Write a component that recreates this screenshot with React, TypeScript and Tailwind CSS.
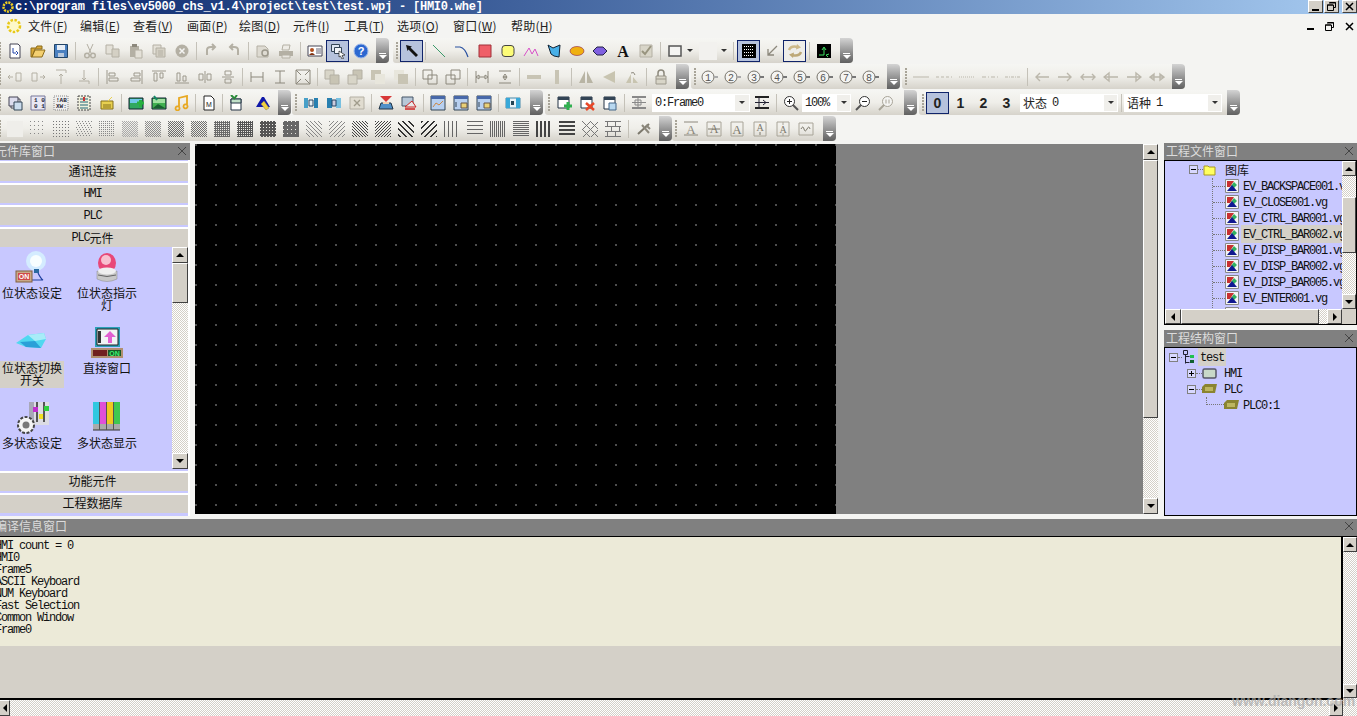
import React from 'react';

const D = '#b4b0a4';
const L = ({ d, c = D, w = 1 }: { d: string; c?: string; w?: number }) => (
  <path d={d} fill="none" stroke={c} strokeWidth={w} />
);

// toolbar glyphs, all on a 16x16 box
const icons: Record<string, React.ReactNode> = {
  new: (<><path d="M3 1h8l2 2v12H3z" fill="#fff" stroke="#445" /><L d="M6 5v5h3M9 8l2 2-2 2" c="#24a" /></>),
  open: (<><path d="M1 5h5l1-2h5v3H5l-3 8H1z" fill="#d8a838" stroke="#8a6a18" /><path d="M2 14l3-7h10l-3 7z" fill="#f4d070" stroke="#8a6a18" /></>),
  save: (<><path d="M1.500 1.500h13v13h-13z" fill="#4a80c0" stroke="#246" /><path d="M4 2h8v5H4z" fill="#e8eef6" /><path d="M5 10h6v4H5z" fill="#b8c8dc" /></>),
  cut: (<><L d="M5 1l4 9M11 1l-4 9" /><circle cx="5" cy="12.500" r="2.300" fill="none" stroke={D} strokeWidth="1.500" /><circle cx="11" cy="12.500" r="2.300" fill="none" stroke={D} strokeWidth="1.500" /></>),
  copy: (<><path d="M1 2h7v9H1z" fill="#e4e1d8" stroke={D} /><path d="M7 6h7v8H7z" fill="#d4d0c4" stroke={D} /></>),
  paste: (<><path d="M2 3h9v11H2z" fill={D} /><path d="M4 1h5v3H4z" fill="#8c887c" /><path d="M7 7h7v8H7z" fill="#e4e1d8" stroke={D} /></>),
  dup: (<><path d="M2 2h8v9H2z" fill="#e4e1d8" stroke={D} /><path d="M5 5h9v9H5z" fill="#d4d0c4" stroke={D} /><L d="M7 8h5M7 10h5M7 12h5" /></>),
  del: (<><circle cx="8" cy="8" r="6.500" fill={D} /><L d="M5.500 5.500l5 5M10.500 5.500l-5 5" c="#f4f4f2" w={1.500} /></>),
  redo: <L d="M4 12V7q0-3 4-3h3M9 1l3 3-3 3" w={2} />,
  undo: <L d="M12 12V7q0-3-4-3H5M7 1L4 4l3 3" w={2} />,
  prev: (<><path d="M2 3h8l3 3v8H2z" fill="#dedbd2" stroke={D} /><circle cx="10" cy="10" r="3" fill="none" stroke="#9c988c" strokeWidth="1.500" /></>),
  print: (<><path d="M5 2h7l-1 5H4z" fill="#eeece6" stroke={D} /><path d="M1 8h14v5H1z" fill={D} /><path d="M4 12h8v3H4z" fill="#e8e6e0" stroke={D} /></>),
  card: (<><path d="M1 3h14v10H1z" fill="#fff" stroke="#445" /><circle cx="5" cy="7" r="2" fill="#b05020" /><path d="M2 12q3-4 6 0z" fill="#803010" /><L d="M9 6h5M9 8h5M9 10h5" c="#667" /></>),
  win: (<><path d="M1.500 1.500h8v7h-8z" fill="#dfe6f2" stroke="#345" /><path d="M4.500 4.500h7v6h-7z" fill="#f2f4f8" stroke="#345" /><path d="M9 8l6 4-3 .5 1.500 3-1.500.5-1.500-3L9 14z" fill="#fff" stroke="#222" strokeWidth=".700" /></>),
  help: (<><circle cx="8" cy="8" r="7" fill="#2c68d0" stroke="#9cb8e8" /><text x="8" y="12" fontSize="11" fontWeight="700" fill="#fff" textAnchor="middle" fontFamily="Liberation Sans">?</text></>),
  arrow: <path d="M2 2l6 1.500-1.500 1L14 12l-2 2-7.500-7.500-1 1.500z" fill="#111" />,
  line: <L d="M2 2l12 12" c="#3a9a6a" />,
  arc: <L d="M1 4h5q5 1 8 10" c="#2850a0" w={1.200} />,
  rect: <path d="M2 2h12v12H2z" fill="#ef5f68" stroke="#a03038" />,
  rrect: <rect x="2" y="2.500" width="12" height="11" rx="3" fill="#fcfc78" stroke="#444" />,
  poly: <L d="M1 13l5-8 3 6 3-5 3 7" c="#d850c8" />,
  shape: <path d="M2 2l5 3 7-3-1 12-5-1-3-2z" fill="#48b0e8" stroke="#123" />,
  ell: <ellipse cx="8" cy="8" rx="7" ry="4.500" fill="#f0b010" stroke="#704" strokeWidth=".500" />,
  dia: <path d="M1 8l4-4h6l4 4-4 4H5z" fill="#8060e0" stroke="#224" />,
  A: <text x="8" y="14" fontSize="16" fontWeight="700" fill="#111" textAnchor="middle" fontFamily="Liberation Serif">A</text>,
  chk: (<><path d="M2 2h12v12H2z" fill="#d8d5c8" stroke={D} /><L d="M4 8l3 3 6-8" c="#98947f" w={2} /></>),
  bord: <path d="M2 3h12v10H2z" fill="#f4f4f2" stroke="#555" strokeWidth="1.500" />,
  grid: (<><path d="M1 1h14v14H1z" fill="#000" /><path d="M3 3.500h10M3 6.500h10M3 9.500h10M3 12.500h10" stroke="#fff" strokeDasharray="1 1" /></>),
  snap: <L d="M13 3L4 12M4 6v6h6" c="#8c887c" w={1.300} />,
  sync: (<><L d="M2 7q2-5 9-3" c="#cdb888" w={2.500} /><path d="M10 1l4 3.500-5 2z" fill="#cdb888" /><L d="M14 9q-2 5-9 3" c="#bda878" w={2.500} /><path d="M6 15l-4-3.500 5-2z" fill="#bda878" /></>),
  sim: (<><path d="M1 1h14v14H1z" fill="#000" /><L d="M3 12h5V5M6 7l2-3 2 3M10 12l2 2M10 12l3-1" c="#3ce060" /></>),
  al1: <L d="M1 8h5M3 6L1 8l2 2M9 4h5v8H9z" />,
  al2: <L d="M15 8h-5M13 6l2 2-2 2M2 4h5v8H2z" />,
  al3: <L d="M8 15V5M6 7l2-2 2 2M3 1h10v3" />,
  al4: <L d="M8 1v10M6 9l2 2 2-2M3 12h10v3" />,
  a1: <L d="M2 1v14M4 4h6v3H4zM4 9h9v3H4z" c="#9c988c" />,
  a2: <L d="M14 1v14M6 4h6v3H6zM3 9h9v3H3z" c="#9c988c" />,
  a3: <L d="M1 2h14M3 4h3v8H3zM9 4h3v5H9z" c="#9c988c" />,
  a4: <L d="M1 14h14M3 4h3v8H3zM9 7h3v5H9z" c="#9c988c" />,
  a5: <L d="M8 2v12M2 5h4v6H2zM10 5h4v6h-4z" c="#9c988c" />,
  a6: <L d="M2 8h12M5 2h6v4H5zM5 10h6v4H5z" c="#9c988c" />,
  w1: <L d="M2 3v10M14 3v10M2 8h12" c="#8c887c" />,
  w2: <L d="M3 2h10M3 14h10M8 2v12" c="#8c887c" />,
  w3: <L d="M1 1h14v14H1zM1 1l5 5M15 1l-5 5M1 15l5-5M15 15l-5-5" c="#8c887c" />,
  z1: (<><path d="M1 1h9v9H1z" fill="#d8d5c8" stroke={D} /><path d="M6 6h9v9H6z" fill="#c8c4b4" stroke={D} /></>),
  z2: (<><path d="M6 1h9v9H6z" fill="#c8c4b4" stroke={D} /><path d="M1 6h9v9H1z" fill="#d8d5c8" stroke={D} /></>),
  z3: (<><path d="M1 1h10v10H1z" fill="#c8c4b4" /><path d="M5 5h10v10H5z" fill="#e8e6dc" /></>),
  z4: (<><path d="M1 1h10v10H1z" fill="#e8e6dc" /><path d="M5 5h10v10H5z" fill="#c8c4b4" /></>),
  g1: <L d="M1 1h9v9H1zM6 6h9v9H6z" c="#8c887c" />,
  g2: <L d="M6 1h9v9H6zM1 6h9v9H1z" c="#8c887c" />,
  s1: <L d="M2 2v12M14 2v12M2 8l3-2v4zM14 8l-3-2v4zM5 8h6" c="#8c887c" />,
  s2: <L d="M2 2h12M2 14h12M8 5l-2 3h4zM8 11l-2-3h4z" c="#8c887c" />,
  lh: <path d="M1 6h14v4H1z" fill="#c8c4b4" />,
  lv: <path d="M6 1h4v14H6z" fill="#c8c4b4" />,
  fh: <path d="M7 2v12H1zM9 2v12h6z" fill="#b8b4a4" />,
  fl: <path d="M2 8l12-6v12z" fill="#c8c4b0" />,
  rt: (<><path d="M2 14L7 5v9zM9 14V8l5 6z" fill="#c8c4b0" /><L d="M7 4q3-2 4 2" c="#8c887c" /></>),
  lock: (<><path d="M3 7h10v8H3z" fill="#d8d5c8" stroke="#9c988c" /><L d="M5 7V4q0-3 3-3t3 3v3" c="#8c887c" w={1.500} /><L d="M3 10h10" c="#9c988c" /></>),
  t1: (<><path d="M4 4h9v9H4z" fill="#fff" stroke="#445" /><path d="M2 2h9v9H2z" fill="#dde" stroke="#445" /><path d="M7 7h8v8H7z" fill="#cde" stroke="#345" /></>),
  t2: (<><path d="M1 1h14v14H1z" fill="#e8e8f4" stroke="#779" /><text x="4" y="7" fontSize="6" fontFamily="Liberation Mono" fontWeight="700" fill="#223">1 0</text><text x="4" y="13" fontSize="6" fontFamily="Liberation Mono" fontWeight="700" fill="#223">0 1</text></>),
  t3: (<><path d="M1 1h14v14H1z" fill="#eee" stroke="#888" strokeDasharray="1 1" /><text x="3" y="7" fontSize="6" fontFamily="Liberation Mono" fontWeight="700" fill="#223">!AB</text><text x="3" y="13" fontSize="6" fontFamily="Liberation Mono" fontWeight="700" fill="#223">XW:</text></>),
  t4: (<><path d="M2 1h12v14H2z" fill="#f0f0dc" stroke="#444" strokeDasharray="2 1" /><L d="M4 4h8M4 7h8M4 10h8M4 13h8" c="#267" /><path d="M7 2h2v4H7z" fill="#c33" /></>),
  t5: (<><path d="M2 6h12v8H2z" fill="#e8d050" stroke="#86701a" /><L d="M4 10h8M4 12h8" c="#86701a" /><L d="M9 6l4-4" c="#e8d050" /></>),
  p1: (<><path d="M1 3h14v11H1z" fill="#30a860" stroke="#123" /><path d="M2 4h12v4H2z" fill="#70c8e8" /><path d="M9 8h7M12.500 5v7" stroke="#28b040" strokeWidth="3" /></>),
  p2: (<><path d="M1 3h14v11H1z" fill="#40b050" stroke="#123" /><path d="M2 4h12v4H2z" fill="#a0e0a0" /><path d="M3 1l3 4" stroke="#186" strokeWidth="2" /><path d="M2 13l5-4 7 4z" fill="#186030" /></>),
  mus: <L d="M5 12V3l8-2v9M5 12a2 2 0 1 1-.1-.1M13 10a2 2 0 1 1-.1-.1" c="#e8a820" w={1.800} />,
  m: (<><path d="M3 1h7l3 3v11H3z" fill="#fff" stroke="#222" /><text x="8" y="12" fontSize="7" fontFamily="Liberation Sans" textAnchor="middle" fill="#222">M</text></>),
  cl: (<><path d="M3 4h10v11H3z" fill="#fff" stroke="#234" /><path d="M3 4h10v4H3z" fill="#c0e0c8" stroke="#234" /><path d="M3 0l4 4M9 0L6 4" stroke="#2a8a3a" strokeWidth="2" /></>),
  ab: (<><path d="M1 12L7 2h2l6 10z" fill="#1018a8" /><path d="M6 9l3-3 5 7-3 2z" fill="#f0d040" stroke="#885" strokeWidth=".500" /></>),
  b1: (<><path d="M1 3h4v10H1z" fill="#48a0c8" /><path d="M11 3h4v10h-4z" fill="#2880b0" /><path d="M6 5h4v6H6z" fill="#e8f0f4" stroke="#246" /></>),
  b2: (<><path d="M1 3h5v10H1z" fill="#2880b0" /><path d="M10 3h5v10h-5z" fill="#78c0e0" /><path d="M6 5h4v6H6z" fill="#ccd" stroke="#246" /></>),
  b3: (<><path d="M1 2h14v12H1z" fill="#e0dcd0" stroke={D} /><L d="M5 5l6 6M11 5l-6 6" c="#a09c8c" w={1.400} /></>),
  c1: (<><path d="M3 8h10l2 6H1z" fill="#5090c8" stroke="#234" /><path d="M2 1h12L8 7z" fill="#d83838" /><path d="M5 7h6v2H5z" fill="#f0d0b0" /></>),
  c2: (<><path d="M1 2h11v9H1z" fill="#b8c8d8" stroke="#456" /><path d="M4 12h11l-4-6z" fill="#e8e8e8" stroke="#c22" /><L d="M4 14h10" c="#c22" w={1.500} /></>),
  d1: (<><path d="M1 1h14v14H1z" fill="#b8d0f0" stroke="#345" /><path d="M1 1h14v3H1z" fill="#4868a8" /><L d="M3 12l3-4 3 2 4-4" c="#c84" /></>),
  d2: (<><path d="M1 1h14v14H1z" fill="#b8d0f0" stroke="#345" /><path d="M1 1h14v3H1z" fill="#4868a8" /><path d="M8 8h6v5H8z" fill="#e8d078" stroke="#654" /><L d="M3 12V7" c="#345" /></>),
  e1: (<><path d="M1 3h14v10H1z" fill="#e8f2f8" stroke="#48a" /><path d="M1 3h4v10H1zM11 3h4v10h-4z" fill="#38a8d8" /><path d="M6 6h3v4H6z" fill="#245" /></>),
  n1: (<><path d="M2 2h11v11H2z" fill="#fff" stroke="#234" /><path d="M2 2h11v3H2z" fill="#345" /><path d="M8 11h8M12 7v8" stroke="#30b050" strokeWidth="3" /></>),
  n2: (<><path d="M2 2h11v11H2z" fill="#fff" stroke="#234" /><path d="M2 2h11v3H2z" fill="#345" /><path d="M7 8l8 7M15 8l-8 7" stroke="#e84828" strokeWidth="2.500" /></>),
  n3: (<><path d="M2 2h11v12H2z" fill="#fff" stroke="#234" /><path d="M2 2h11v3H2z" fill="#345" /><path d="M7 8h7v7H7z" fill="#b8d8f0" stroke="#468" /></>),
  fm: (<><path d="M1 2h14M1 13h14" stroke="#888" strokeWidth="2" /><path d="M1 7.500h14" stroke="#888" /><path d="M7 2v12M4 5h6v5H4z" stroke="#888" fill="none" /></>),
  fm2: (<><path d="M1 2h14M1 13h14" stroke="#222" strokeWidth="2" /><path d="M1 7.500h14" stroke="#223" /><path d="M9 5l3 2.500-3 2.500M5 2v12" stroke="#223" fill="none" /></>),
  zi: (<><circle cx="6.500" cy="6.500" r="5" fill="#fff" stroke="#333" /><L d="M4 6.500h5M6.500 4v5" c="#222" /><L d="M10 10l5 5" c="#555" w={2} /></>),
  zo: (<><circle cx="9.500" cy="6.500" r="5" fill="#fff" stroke="#333" /><L d="M7 6.500h5" c="#222" /><L d="M6 10l-5 5" c="#555" w={2} /></>),
  zf: (<><circle cx="9.500" cy="6.500" r="5" fill="#f4f4f2" stroke="#a8a498" /><L d="M8 4.500v4M11 4.500v4" c="#a8a498" /><L d="M6 10l-5 5" c="#a8a498" w={2} /></>),
  hk: (<><L d="M2 13L13 3" c="#7c786c" w={2} /><L d="M6 4l7 8M10 4l4 4" c="#8c887c" w={2} /></>),
  x1: (<><L d="M1 1h14M1 14h14" c="#8c887c" /><text x="8" y="13" fontSize="13" fontFamily="Liberation Serif" textAnchor="middle" fill="#8c887c">A</text></>),
  x2: (<><L d="M1 1h14v14H1z" c="#a8a498" /><text x="8" y="12" fontSize="12" fontFamily="Liberation Serif" textAnchor="middle" fill="#7c786c">A</text><L d="M2 8h12" c="#7c786c" /></>),
  x3: (<><L d="M2 1h12M2 15h12M2 1v14M14 1v14" c="#a8a498" /><text x="8" y="13" fontSize="13" fontFamily="Liberation Serif" textAnchor="middle" fill="#7c786c">A</text></>),
  x4: (<><L d="M2 1h12v14H2z" c="#a8a498" /><text x="8" y="10" fontSize="10" fontFamily="Liberation Serif" textAnchor="middle" fill="#7c786c">A</text><L d="M8 11v3" c="#7c786c" /></>),
  x5: (<><L d="M2 1h12v14H2zM8 1v3M8 12v3" c="#a8a498" /><text x="8" y="12" fontSize="10" fontFamily="Liberation Serif" textAnchor="middle" fill="#7c786c">A</text></>),
  x6: (<><L d="M1 2h14v12H1z" c="#a8a498" /><L d="M3 8q2-4 3 0t3 0 3 0" c="#7c786c" /></>),
};

// line style and line end glyphs for the greyed out bar
const LineStyle = ({ dash }: { dash: string }) => (
  <svg width="16" height="16" viewBox="0 0 16 16"><path d="M0 8h16" stroke="#bbb7ab" strokeDasharray={dash} /></svg>
);
const LineArrow = ({ d }: { d: string }) => (
  <svg width="16" height="16" viewBox="0 0 16 16"><path d={d} fill="none" stroke="#bbb7ab" strokeWidth="1.400" /></svg>
);

const Ico = ({ n }: { n: string }) => (
  <svg width="16" height="16" viewBox="0 0 16 16">{icons[n]}</svg>
);

const Btn = ({ n, active, lite, children }: { n?: string; active?: boolean; lite?: boolean; children?: React.ReactNode }) => (
  <div className={`w-[23px] h-[22px] shrink-0 flex items-center justify-center ${active ? 'bg-[#b6c2dc] border border-[#10246a]' : ''} ${lite ? 'bg-[#eeede9] border border-[#10246a]' : ''}`}>
    {n ? <Ico n={n} /> : children}
  </div>
);

const Sep = ({ w = 'w-[6px]' }: { w?: string }) => (
  <div className={`${w} h-[18px] shrink-0 flex justify-center`}>
    <div className="w-px h-full bg-[#c4c1b8]" />
  </div>
);

const Grip = () => (
  <div className="w-[7px] h-[18px] shrink-0 flex flex-col justify-between items-center">
    {[0, 1, 2, 3, 4, 5].map((i) => (
      <div key={i} className="w-[2px] h-[2px] bg-[#a8a498]" />
    ))}
  </div>
);

const Chevron = ({ ml }: { ml: string }) => (
  <div className={`${ml} w-[13px] self-stretch shrink-0 rounded-r-[4px] bg-gradient-to-b from-[#d4d4d4] to-[#606060] flex flex-col items-center justify-end pb-[4px]`}>
    <div className="w-[7px] h-px bg-white mb-[1px]" />
    <div className="w-0 h-0 border-x-[4px] border-x-transparent border-t-[4px] border-t-white" />
  </div>
);

const Toolbar = ({ className = '', chev = 'ml-[4px]', children }: { className?: string; chev?: string; children: React.ReactNode }) => (
  <div className={`h-[25px] flex items-center shrink-0 rounded-[3px] bg-gradient-to-b from-[#f6f6f3] via-[#efeee9] to-[#d6d3cb] ${className}`}>
    <Grip />
    {children}
    <Chevron ml={chev} />
  </div>
);

// renders a compact spec: names are buttons, | is a separator, : a narrow one
const Items = ({ spec, active = [] }: { spec: string; active?: string[] }) => (
  <>
    {spec.split(' ').map((s, i) =>
      s === '|' ? <Sep key={i} /> : s === ':' ? <Sep key={i} w="w-[4px]" /> : <Btn key={i} n={s} active={active.includes(s)} />
    )}
  </>
);

const DropArrow = () => <div className="w-0 h-0 border-x-[3px] border-x-transparent border-t-[3px] border-t-[#333]" />;

const Combo = ({ w, btn, children }: { w: string; btn: string; children: React.ReactNode }) => (
  <div className={`${w} h-[18px] shrink-0 bg-white flex items-center justify-between`}>
    <div className="pl-[3px] flex items-center text-[12px] text-[#222] whitespace-nowrap">{children}</div>
    <div className={`${btn} h-full bg-[#f0efeb] border border-white flex items-center justify-center shrink-0`}>
      <DropArrow />
    </div>
  </div>
);

const Lat = ({ children, className = '' }: { children: React.ReactNode; className?: string }) => (
  <span className={`font-['Liberation_Mono',monospace] text-[12px] tracking-[-1.2px] ${className}`}>{children}</span>
);

const Menu = ({ t, k, w }: { t: string; k: string; w: string }) => (
  <span className={`${w} shrink-0 text-[12px] tracking-[0.2px] text-[#222] whitespace-nowrap leading-none`}>
    {t}(<span className="underline">{k}</span>)
  </span>
);

// fill pattern swatches for the fourth toolbar row
type Pat = { f: (x: number, y: number) => boolean; c: string; bg?: string };
const pats: Pat[] = [
  { f: () => false, c: '#000', bg: '#efeeea' },
  { f: (x, y) => x % 4 === 0 && y % 4 === 0, c: '#888' },
  { f: (x, y) => x % 3 === 0 && y % 3 === 0, c: '#777' },
  { f: (x, y) => (x + y) % 3 === 0 && y % 2 === 0, c: '#888' },
  { f: (x, y) => x % 2 === 0 && y % 2 === 0, c: '#888' },
  { f: (x, y) => (x + y) % 2 === 0, c: '#aaa' },
  { f: (x, y) => (x + y) % 2 === 0, c: '#8c8c8c' },
  { f: (x, y) => (x + y) % 2 === 0, c: '#6c6c6c' },
  { f: (x, y) => (x + y) % 2 === 0 || (x % 2 === 0 && y % 2 === 0), c: '#707070' },
  { f: (x, y) => !(x % 2 === 0 && y % 2 === 0), c: '#6a6a6a' },
  { f: (x, y) => !(x % 2 === 0 && y % 2 === 0), c: '#555' },
  { f: (x, y) => !(x % 3 === 0 && y % 3 === 0), c: '#555' },
  { f: (x, y) => !(x % 4 === 0 && y % 4 === 0), c: '#666' },
  { f: (x, y) => (x - y + 32) % 4 === 0, c: '#888' },
  { f: (x, y) => (x + y) % 4 === 0, c: '#888' },
  { f: (x, y) => (x - y + 32) % 3 === 0, c: '#444' },
  { f: (x, y) => (x + y) % 3 === 0, c: '#444' },
  { f: (x, y) => (x - y + 32) % 6 < 2, c: '#333' },
  { f: (x, y) => (x + y) % 6 < 2, c: '#333' },
  { f: (x) => x % 4 === 0, c: '#666' },
  { f: (_, y) => y % 4 === 0, c: '#666' },
  { f: (x) => x % 2 === 0, c: '#666' },
  { f: (_, y) => y % 2 === 0, c: '#666' },
  { f: (x) => x % 4 < 2, c: '#444' },
  { f: (_, y) => y % 4 < 2, c: '#444' },
  { f: (x, y) => (x + y) % 8 === 0 || (x - y + 32) % 8 === 0, c: '#777' },
  { f: (x, y) => y % 5 === 0 || (y % 10 < 5 ? x % 8 === 2 : x % 8 === 6), c: '#777' },
];

const Swatch = ({ p }: { p: Pat }) => {
  const cells: React.ReactNode[] = [];
  for (let y = 0; y < 16; y++) for (let x = 0; x < 16; x++) if (p.f(x, y)) cells.push(<rect key={`${x}-${y}`} x={x} y={y} width="1" height="1" fill={p.c} />);
  return (
    <svg width="16" height="16" viewBox="0 0 16 16" shapeRendering="crispEdges">
      {p.bg ? <rect width="16" height="16" fill={p.bg} /> : null}
      {cells}
    </svg>
  );
};

const Circled = ({ n }: { n: string }) => (
  <div className="w-[23px] h-[22px] shrink-0 flex items-center justify-center">
    <svg width="18" height="16" viewBox="0 0 18 16">
      <circle cx="7" cy="8" r="6" fill="#f4f4f2" stroke="#77736a" />
      <text x="7" y="11.500" fontSize="10" textAnchor="middle" fontFamily="Liberation Mono" fill="#555">{n}</text>
      <path d="M13 7h4v2h-4z" fill={+n > 2 ? '#777' : '#aaa'} />
    </svg>
  </div>
);

const WinBtn = ({ children, className = '' }: { children: React.ReactNode; className?: string }) => (
  <div className={`w-[15px] h-[13px] bg-[#d4d0c8] border-t border-l border-white border-b border-r border-b-[#404040] border-r-[#404040] flex items-center justify-center ${className}`}>
    {children}
  </div>
);

const MinG = () => <div className="w-[7px] h-[2px] bg-black self-end mb-[1px]" />;
const RestG = () => (
  <svg width="9" height="9" viewBox="0 0 9 9"><path d="M2.500.5h6v5h-2M.5 3h6v5.500h-6z" fill="none" stroke="#000" /><path d="M2 1h7M0 3h6" stroke="#000" /></svg>
);
const CloseG = () => (
  <svg width="9" height="9" viewBox="0 0 9 9"><path d="M1 1l7 7M8 1l-7 7" stroke="#000" strokeWidth="1.500" /></svg>
);

const ScrollBtn = ({ dir, className = '' }: { dir: 'up' | 'down' | 'left' | 'right'; className?: string }) => (
  <div className={`bg-[#d4d0c8] border border-t-white border-l-white border-b-[#404040] border-r-[#404040] flex items-center justify-center shrink-0 ${className}`}>
    {dir === 'up' && <div className="w-0 h-0 border-x-[4px] border-x-transparent border-b-[4px] border-b-black" />}
    {dir === 'down' && <div className="w-0 h-0 border-x-[4px] border-x-transparent border-t-[4px] border-t-black" />}
    {dir === 'left' && <div className="w-0 h-0 border-y-[4px] border-y-transparent border-r-[4px] border-r-black" />}
    {dir === 'right' && <div className="w-0 h-0 border-y-[4px] border-y-transparent border-l-[4px] border-l-black" />}
  </div>
);

const Thumb = ({ className }: { className: string }) => (
  <div className={`bg-[#d4d0c8] border border-t-white border-l-white border-b-[#404040] border-r-[#404040] shrink-0 ${className}`} />
);

const checker = 'bg-[repeating-conic-gradient(#d4d0c8_0_25%,#ffffff_0_50%)] bg-[size:2px_2px]';

const PanelTitle = ({ t, cut, pb = 'pb-[1px]' }: { t: string; cut?: boolean; pb?: string }) => (
  <div className={`h-[17px] shrink-0 bg-[#808080] flex items-center justify-between overflow-hidden ${pb}`}>
    <span className={`text-[12px] text-[#dcdcdc] leading-none whitespace-nowrap ${cut ? '-ml-[5px]' : 'ml-[2px]'}`}>{t}</span>
    <svg width="10" height="10" viewBox="0 0 10 10" className="mr-[3px]"><path d="M1 1l8 8M9 1l-8 8" stroke="#444" /></svg>
  </div>
);

const AccBtn = ({ children, pb = 'pb-[2px]' }: { children: React.ReactNode; pb?: string }) => (
  <div className={`h-[20px] shrink-0 bg-[#d4d0c8] border-t-2 border-white flex items-center justify-center pr-[3px] ${pb} text-[12px] text-[#111] leading-none`}>
    {children}
  </div>
);

const Big1 = () => (
  <svg width="34" height="34" viewBox="0 0 34 34">
    <circle cx="21" cy="10" r="10" fill="#d4ecff" />
    <circle cx="21" cy="10" r="6" fill="#f8feff" />
    <path d="M19 18h5v4h-5z" fill="#2a6aa0" />
    <path d="M23 22q3 6 5 7H14" fill="none" stroke="#2040a0" strokeWidth="1.200" />
    <rect x="1" y="20" width="16" height="11" fill="#c8a888" stroke="#806040" />
    <rect x="3" y="22" width="12" height="7" fill="#d04848" />
    <text x="9" y="28" fontSize="7" fontWeight="700" fontFamily="Liberation Sans" fill="#fff" textAnchor="middle">ON</text>
  </svg>
);
const Big2 = () => (
  <svg width="34" height="34" viewBox="0 0 34 34">
    <path d="M7 20q10 4 20 0v8q-10 5-20 0z" fill="#c8c8c8" stroke="#888" strokeWidth=".500" />
    <path d="M8 24q9 3 18 0" stroke="#666" fill="none" />
    <ellipse cx="17" cy="12" rx="9" ry="10" fill="#e84878" />
    <ellipse cx="16" cy="9" rx="5" ry="5" fill="#f8c0d0" />
    <ellipse cx="17" cy="20" rx="9" ry="3.500" fill="#f0f0f0" />
  </svg>
);
const Big3 = () => (
  <svg width="34" height="34" viewBox="0 0 34 34">
    <path d="M1 17l12-8 16-2 2 6-5 9-15-1z" fill="#50d8f0" />
    <path d="M13 9l16-2 2 6-11 2z" fill="#a8ecf8" />
    <path d="M5 16l15-1 6 7-15-1z" fill="#2aa0d8" />
  </svg>
);
const Big4 = () => (
  <svg width="34" height="34" viewBox="0 0 34 34">
    <path d="M5 1h25v20H5z" fill="#2aa0b8" />
    <path d="M7 3h21v16H7z" fill="#f0f4f4" stroke="#222" />
    <path d="M8 5h3v12H8z" fill="#333" />
    <path d="M20 5l6 6h-4v6h-4v-6h-4z" fill="#e060d0" />
    <path d="M1 22h32v10H1z" fill="#b09070" />
    <path d="M3 24h14v6H3z" fill="#702020" />
    <path d="M18 24h13v6H18z" fill="#185828" />
    <text x="24.500" y="29.500" fontSize="7" fontWeight="700" fontFamily="Liberation Sans" fill="#40f070" textAnchor="middle">ON</text>
  </svg>
);
const Big5 = () => (
  <svg width="34" height="34" viewBox="0 0 34 34">
    <path d="M14 1h20v23H14z" fill="#dcdce4" />
    <path d="M14 1h5v20h-5z" fill="#a8a8b8" />
    <path d="M21 1h2v20h-2zM28 1h2v20h-2z" fill="#555" />
    <path d="M18 6h5v5h-5z" fill="#c030d0" />
    <path d="M24 13h4v5h-4z" fill="#f0e020" />
    <path d="M29 5h5v5h-5z" fill="#30d040" />
    <circle cx="11" cy="24" r="8" fill="#f4f4f4" stroke="#444" strokeWidth="2" strokeDasharray="3 1.500" />
    <circle cx="11" cy="24" r="3.500" fill="#777" />
  </svg>
);
const Big6 = () => (
  <svg width="34" height="34" viewBox="0 0 34 34">
    <path d="M3 1h6v22H3z" fill="#30c8e0" /><path d="M10 1h6v22h-6z" fill="#e050d8" />
    <path d="M17 1h6v22h-6z" fill="#f0c820" /><path d="M24 1h6v22h-6z" fill="#40c850" />
    <path d="M3 23h6v6H3zM10 23h6v6h-6zM17 23h6v6h-6zM24 23h6v6h-6z" fill="#aaa" />
    <path d="M3 29h27" stroke="#333" /><path d="M9.500 1v28M16.500 1v28M23.500 1v28" stroke="#555" />
  </svg>
);

const Lib = ({ icon, t, hl }: { icon: React.ReactNode; t: string; hl?: boolean }) => (
  <div className="h-[75px] w-[64px] flex flex-col items-center">
    <div className="h-[34px] mt-[3px] shrink-0">{icon}</div>
    <div className={`mt-[1px] w-[64px] text-[12px] leading-[12px] text-center text-[#111] pt-[1px] pb-[2px] ${hl ? 'bg-[#d4d0c8]' : ''}`}>{t}</div>
  </div>
);

const FileIco = () => (
  <svg width="14" height="14" viewBox="0 0 14 14" className="shrink-0">
    <path d="M.5.5h13v13H.5z" fill="#f4f4f4" stroke="#888" />
    <path d="M2 2h7L5 8H2z" fill="#c83030" />
    <path d="M9 3l3 3-3 3-3-2z" fill="#30b060" />
    <path d="M2 12l5-6 5 6z" fill="#101890" />
  </svg>
);

const files = ['EV_BACKSPACE001.vg', 'EV_CLOSE001.vg', 'EV_CTRL_BAR001.vg', 'EV_CTRL_BAR002.vg', 'EV_DISP_BAR001.vg', 'EV_DISP_BAR002.vg', 'EV_DISP_BAR005.vg', 'EV_ENTER001.vg', 'EV_ENTER002.vg'];

const Box = ({ plus }: { plus?: boolean }) => (
  <div className="w-[9px] h-[9px] border border-[#808080] bg-[#d8d8ff] relative shrink-0">
    <div className="absolute left-[1px] top-[3px] w-[5px] h-px bg-black" />
    {plus ? <div className="absolute left-[3px] top-[1px] w-px h-[5px] bg-black" /> : null}
  </div>
);

const Dots = ({ w }: { w: string }) => <div className={`${w} h-px border-t border-dotted border-[#777] shrink-0`} />;

const PlcIco = () => (
  <svg width="15" height="10" viewBox="0 0 15 10" className="shrink-0">
    <path d="M3 0h12l-2 9H0V3z" fill="#8a8430" />
    <path d="M4 3v4M6 3v4M8 3v4M10 3v4" stroke="#f0e890" />
  </svg>
);

const log = ['HMI count = 0', 'HMI0', 'Frame5', 'ASCII Keyboard', 'NUM Keyboard', 'Fast Selection', 'Common Window', 'Frame0'];

export default function App() {
  return (
    <div className="w-[1357px] h-[716px] relative overflow-hidden bg-[#f4f4f2] flex flex-col text-[12px] leading-[14px] font-['Noto_Sans_CJK_SC','Liberation_Sans',sans-serif]">
      {/* title bar */}
      <div className="h-[14px] shrink-0 bg-gradient-to-r from-[#0a246a] to-[#a6caf0] flex items-center overflow-hidden">
        <svg width="14" height="14" viewBox="0 0 14 14" className="shrink-0 ml-[1px]">
          <circle cx="7" cy="7" r="4.500" fill="none" stroke="#f0d020" strokeWidth="2.500" strokeDasharray="2 1" />
        </svg>
        <span className="font-['Liberation_Mono',monospace] font-bold text-[12px] tracking-[-0.22px] text-white whitespace-pre leading-none">{'c:\\program files\\ev5000_chs_v1.4\\project\\test\\test.wpj - [HMI0.whe]'}</span>
        <div className="ml-auto flex gap-[1px] items-start self-start">
          <WinBtn><MinG /></WinBtn>
          <WinBtn><RestG /></WinBtn>
          <WinBtn className="ml-[2px]"><CloseG /></WinBtn>
        </div>
      </div>

      {/* menu bar */}
      <div className="h-[24px] shrink-0 flex items-center">
        <svg width="20" height="20" viewBox="0 0 20 20" className="ml-[4px] mr-[4px] shrink-0">
          <circle cx="10" cy="10" r="6" fill="#fdf8c8" stroke="#e8c818" strokeWidth="2.500" strokeDasharray="2.500 1.500" />
        </svg>
        <div className="flex">
          <Menu t="文件" k="F" w="w-[52px]" />
          <Menu t="编辑" k="E" w="w-[53px]" />
          <Menu t="查看" k="V" w="w-[54px]" />
          <Menu t="画面" k="P" w="w-[52px]" />
          <Menu t="绘图" k="D" w="w-[54px]" />
          <Menu t="元件" k="I" w="w-[51px]" />
          <Menu t="工具" k="T" w="w-[53px]" />
          <Menu t="选项" k="O" w="w-[56px]" />
          <Menu t="窗口" k="W" w="w-[58px]" />
          <Menu t="帮助" k="H" w="w-[44px]" />
        </div>
        <div className="ml-auto flex items-center gap-[11px] pr-[3px]">
          <div className="w-[7px] h-[2px] bg-black mt-[5px]" />
          <RestG />
          <CloseG />
        </div>
      </div>

      {/* toolbar rows */}
      <div className="flex flex-col gap-[1px] shrink-0">
        <div className="flex">
          <Toolbar className="-ml-[4px]">
            <Items spec="new open save | cut copy paste dup del | redo undo | prev print | card win help" active={['win']} />
          </Toolbar>
          <Toolbar className="ml-[4px]" chev="ml-[5px]">
            <Items spec="arrow : line arc rect rrect poly shape ell dia A chk" active={['arrow']} />
            <Sep w="w-[7px]" />
            <div className="w-[21px] h-[22px] flex items-center justify-center shrink-0"><Ico n="bord" /></div>
            <div className="w-[10px] flex justify-center shrink-0"><DropArrow /></div>
            <div className="w-[18px] h-[18px] ml-[4px] bg-[#f2f1ee] shrink-0" />
            <div className="w-[10px] ml-[2px] flex justify-center shrink-0"><DropArrow /></div>
            <Sep w="w-[8px]" />
            <Btn n="grid" active />
            <Btn n="snap" />
            <Btn n="sync" lite />
            <Sep />
            <Btn n="sim" />
          </Toolbar>
        </div>

        <div className="flex">
          <Toolbar className="-ml-[4px]">
            <Items spec="al1 al2 al3 al4 | a1 a2 a3 a4 a5 a6 | w1 w2 w3 | z1 z2 z3 z4 | g1 g2 | s1 s2 | lh lv | fh fl rt | lock" />
          </Toolbar>
          <Toolbar className="ml-[2px]" chev="ml-[5px]">
            {['1', '2', '3', '4', '5', '6', '7', '8'].map((n) => <Circled key={n} n={n} />)}
          </Toolbar>
          <Toolbar className="ml-[2px]" chev="ml-[4px]">
            {['', '3 2', '1 1', '4 2 1 2', '3 1 1 1'].map((d, i) => <Btn key={i}><LineStyle dash={d} /></Btn>)}
            <Sep />
            {['M15 8H2M6 4L2 8l4 4', 'M1 8h13M10 4l4 4-4 4', 'M1 8h14M4 5L1 8l3 3M12 5l3 3-3 3', 'M15 8H2M6 4L1 8l5 4z', 'M1 8h13M10 4l5 4-5 4z', 'M1 8h14M5 5L1 8l4 3zM11 5l4 3-4 3z'].map((d, i) => <Btn key={i}><LineArrow d={d} /></Btn>)}
          </Toolbar>
        </div>

        <div className="flex">
          <Toolbar className="-ml-[4px]">
            <Items spec="t1 t2 t3 t4 t5 | p1 p2 mus : m : cl" />
            <div className="w-[4px] shrink-0" />
            <Btn n="ab" />
          </Toolbar>
          <Toolbar className="ml-[1px]" chev="ml-[6px]">
            <Items spec="b1 b2 b3 | c1 c2 | d1 d2 d2 | e1" />
          </Toolbar>
          <Toolbar className="ml-[2px]" chev="ml-[7px]">
            <Items spec="n1 n2 n3 | fm" />
            <div className="ml-[2px]" />
            <Combo w="w-[98px]" btn="w-[16px]"><Lat>0:Frame0</Lat></Combo>
            <Btn n="fm2" />
            <Sep />
            <Btn n="zi" />
            <Combo w="w-[49px]" btn="w-[15px]"><Lat>100%</Lat></Combo>
            <Btn n="zo" />
            <Btn n="zf" />
          </Toolbar>
          <Toolbar className="ml-[2px]" chev="ml-[5px]">
            {['0', '1', '2', '3'].map((n) => (
              <Btn key={n} active={n === '0'}>
                <span className="font-['Liberation_Sans',sans-serif] font-bold text-[14px] text-[#222] leading-none">{n}</span>
              </Btn>
            ))}
            <div className="ml-[2px]" />
            <Combo w="w-[98px]" btn="w-[15px]">状态<Lat className="ml-[5px]">0</Lat></Combo>
            <Sep w="w-[6px]" />
            <Combo w="w-[98px]" btn="w-[15px]">语种<Lat className="ml-[5px]">1</Lat></Combo>
          </Toolbar>
        </div>

        <div className="flex">
          <Toolbar className="-ml-[4px]">
            {pats.map((p, i) => <Btn key={i}><Swatch p={p} /></Btn>)}
            <Sep w="w-[8px]" />
            <Btn n="hk" />
          </Toolbar>
          <Toolbar chev="ml-[6px]">
            <Items spec="x1 x2 x3 x4 x5 x6" />
          </Toolbar>
        </div>
      </div>

      {/* workspace */}
      <div className="h-[373px] mt-[2px] shrink-0 flex">
        {/* component library */}
        <div className="w-[190px] shrink-0 flex flex-col">
          <PanelTitle t="元件库窗口" cut />
          <div className="flex-1 min-h-0 bg-[#c8c8ff] border-r-2 border-white flex flex-col pt-[1px] gap-[2px]">
            <AccBtn>通讯连接</AccBtn>
            <AccBtn pb="pb-0"><Lat>HMI</Lat></AccBtn>
            <AccBtn pb="pb-0"><Lat>PLC</Lat></AccBtn>
            <AccBtn pb="pb-[1px]"><Lat>PLC</Lat>元件</AccBtn>
            <div className="flex-1 min-h-0 flex -mt-[2px]">
              <div className="flex-1 min-w-0 grid grid-cols-[64px_64px] content-start justify-start pt-[1px] gap-x-[11px]">
                <Lib icon={<Big1 />} t="位状态设定" />
                <Lib icon={<Big2 />} t="位状态指示灯" />
                <Lib icon={<Big3 />} t="位状态切换开关" hl />
                <Lib icon={<Big4 />} t="直接窗口" />
                <Lib icon={<Big5 />} t="多状态设定" />
                <Lib icon={<Big6 />} t="多状态显示" />
              </div>
              <div className={`w-[16px] shrink-0 flex flex-col ${checker}`}>
                <ScrollBtn dir="up" className="h-[16px]" />
                <Thumb className="h-[40px]" />
                <div className="flex-1" />
                <ScrollBtn dir="down" className="h-[16px]" />
              </div>
            </div>
            <AccBtn>功能元件</AccBtn>
            <AccBtn>工程数据库</AccBtn>
            <div className="h-[1px]" />
          </div>
        </div>

        {/* canvas */}
        <div className="w-[5px] shrink-0" />
        <div className="flex-1 min-w-0 flex mt-[1px] mb-[2px]">
          <div className="w-[641px] shrink-0 bg-black bg-[radial-gradient(circle_at_1px_1px,#a0a0a0_0.5px,transparent_0.9px)] bg-[size:20px_20px]" />
          <div className="flex-1 bg-[#808080]" />
          <div className={`w-[15px] shrink-0 flex flex-col ${checker}`}>
            <ScrollBtn dir="up" className="h-[16px]" />
            <Thumb className="h-[258px]" />
            <div className="flex-1" />
            <ScrollBtn dir="down" className="h-[16px]" />
          </div>
        </div>
        <div className="w-[6px] shrink-0" />

        {/* project panels */}
        <div className="w-[193px] shrink-0 flex flex-col">
          <PanelTitle t="工程文件窗口" />
          <div className="h-[165px] shrink-0 border border-black flex flex-col bg-[#c8c8ff] overflow-hidden">
            <div className="flex-1 min-h-0 flex">
              <div className="flex-1 min-w-0 overflow-hidden pl-[24px] text-[#111]">
                <div className="h-[17px] flex items-center">
                  <Box />
                  <Dots w="w-[5px]" />
                  <svg width="13" height="12" viewBox="0 0 13 12" className="shrink-0"><path d="M1 2h4l1 1h6v8H1z" fill="#ffff60" stroke="#aa9a20" /></svg>
                  <span className="ml-[9px] leading-none">图库</span>
                </div>
                <div className="ml-[23px] border-l border-dotted border-[#777]">
                  {files.map((f) => (
                    <div key={f} className="h-[16px] flex items-center">
                      <Dots w="w-[12px]" />
                      <FileIco />
                      <span className={`ml-[2px] px-[2px] leading-[15px] whitespace-nowrap ${f === 'EV_CTRL_BAR002.vg' ? 'bg-[#d4d0c8]' : ''}`}><Lat>{f}</Lat></span>
                    </div>
                  ))}
                </div>
              </div>
              <div className={`w-[14px] shrink-0 flex flex-col ${checker}`}>
                <ScrollBtn dir="up" className="h-[15px]" />
                <Thumb className="h-[56px] mt-[21px]" />
                <div className="flex-1" />
                <ScrollBtn dir="down" className="h-[15px]" />
              </div>
            </div>
            <div className="h-[15px] shrink-0 flex">
              <ScrollBtn dir="left" className="w-[16px]" />
              <Thumb className="w-[138px]" />
              <div className={`flex-1 ${checker}`} />
              <ScrollBtn dir="right" className="w-[15px]" />
              <div className="w-[14px] shrink-0 bg-[#d4d0c8]" />
            </div>
          </div>
          <div className="h-[5px] shrink-0" />
          <PanelTitle t="工程结构窗口" />
          <div className="flex-1 min-h-0 border border-black bg-[#c8c8ff] pt-[1px] pl-[4px] text-[#111]">
            <div className="h-[16px] flex items-center">
              <Box />
              <Dots w="w-[4px]" />
              <svg width="13" height="14" viewBox="0 0 13 14" className="shrink-0">
                <path d="M1.500.5h4v4h-4zM3.500 4.500v9M3.500 6.500h4M3.500 12.500h4" fill="none" stroke="#223" />
                <path d="M8 5h4v3H8z" fill="#20c050" /><path d="M8 10h4v3H8z" fill="#106030" />
              </svg>
              <span className="ml-[3px] px-[2px] bg-[#d4d0c8] leading-[15px]"><Lat>test</Lat></span>
            </div>
            <div className="ml-[22px] flex flex-col">
              <div className="h-[16px] flex items-center -ml-[4px]">
                <Box plus />
                <Dots w="w-[6px]" />
                <svg width="15" height="11" viewBox="0 0 15 11" className="shrink-0"><rect x="1" y="1" width="13" height="9" rx="1.500" fill="#c8d8c8" stroke="#556" strokeWidth="1.500" /></svg>
                <span className="ml-[7px]"><Lat>HMI</Lat></span>
              </div>
              <div className="h-[16px] flex items-center -ml-[4px]">
                <Box />
                <Dots w="w-[6px]" />
                <PlcIco />
                <span className="ml-[7px]"><Lat>PLC</Lat></span>
              </div>
              <div className="h-[16px] flex items-center ml-[15px]">
                <div className="w-[18px] h-[8px] border-l border-b border-dotted border-[#777] -mt-[8px] shrink-0" />
                <PlcIco />
                <span className="ml-[4px]"><Lat>PLC0:1</Lat></span>
              </div>
            </div>
          </div>
        </div>
      </div>

      {/* compile output */}
      <div className="h-[3px] shrink-0" />
      <PanelTitle t="编译信息窗口" cut pb="pb-[3px]" />
      <div className="h-[1px] shrink-0 bg-black" />
      <div className="flex-1 min-h-0 flex">
        <div className="flex-1 min-w-0 flex flex-col">
          <div className="flex-1 min-h-0 flex flex-col border-r-2 border-black">
            <div className="h-[109px] shrink-0 bg-[#ecead8] pt-[3px] overflow-hidden">
              {log.map((l) => (
                <div key={l} className="h-[12px] flex items-center -ml-[5px] text-[#111]"><Lat className="whitespace-pre">{l}</Lat></div>
              ))}
            </div>
            <div className="flex-1 bg-[#d4d0c8]" />
          </div>
          <div className={`h-[18px] shrink-0 border-t-2 border-black flex ${checker}`}>
            <ScrollBtn dir="left" className="w-[10px] h-[16px] border-l-0" />
            <div className="flex-1" />
            <ScrollBtn dir="right" className="w-[14px] h-[16px]" />
          </div>
        </div>
        <div className={`w-[14px] shrink-0 flex flex-col ${checker}`}>
          <ScrollBtn dir="up" className="h-[15px]" />
          <div className="flex-1" />
          <ScrollBtn dir="down" className="h-[14px] mb-[18px]" />
        </div>
      </div>

      <span className="absolute left-[1232px] top-[694px] font-['Liberation_Sans',sans-serif] font-bold text-[14px] text-[#a8a8a8] opacity-70 leading-none whitespace-nowrap">www.diangon.com</span>
    </div>
  );
}
